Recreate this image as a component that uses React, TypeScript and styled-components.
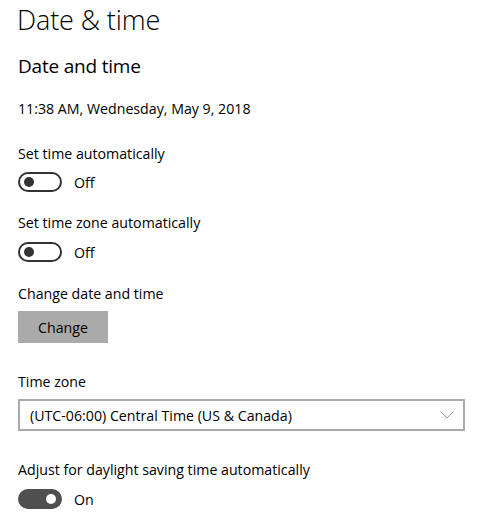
import React from "react";
import styled, { createGlobalStyle } from "styled-components";

const Global = createGlobalStyle`
  html, body { margin: 0; padding: 0; background: #ffffff; }
  body { font-family: "Open Sans", "Noto Sans", sans-serif; color: #000; }
`;

const Page = styled.div`
  padding: 0 21px 0 18px;
  display: flex;
  flex-direction: column;
  width: 486px;
  box-sizing: border-box;
`;

const Title = styled.h1`
  margin: 0 0 0 -1px;
  font-size: 27px;
  font-weight: 300;
  line-height: 40px;
  height: 40px;
  letter-spacing: -0.1px;
`;

const Subtitle = styled.h2`
  margin: 12px 0 0 0;
  font-size: 19px;
  font-weight: 400;
  line-height: 28px;
  height: 28px;
  letter-spacing: -0.2px;
`;

const Text = styled.div<{ $mt: number }>`
  margin-top: ${(p) => p.$mt}px;
  font-size: 14.2px;
  line-height: 20px;
  height: 20px;
  white-space: nowrap;
`;

const ToggleRow = styled.div<{ $mt: number }>`
  margin-top: ${(p) => p.$mt}px;
  display: flex;
  align-items: center;
  gap: 12px;
  height: 20px;
  font-size: 14.2px;
`;

const Track = styled.div<{ $on: boolean }>`
  width: 44px;
  height: 20px;
  box-sizing: border-box;
  border-radius: 10px;
  border: 2px solid ${(p) => (p.$on ? "#4f4f4f" : "#333333")};
  background: ${(p) => (p.$on ? "#4f4f4f" : "#ffffff")};
  display: flex;
  align-items: center;
  justify-content: ${(p) => (p.$on ? "flex-end" : "flex-start")};
  padding: 0 4px;
`;

const Thumb = styled.div<{ $on: boolean }>`
  width: 10px;
  height: 10px;
  border-radius: 50%;
  background: ${(p) => (p.$on ? "#ffffff" : "#333333")};
`;

const Button = styled.button`
  margin-top: 7px;
  width: 90px;
  height: 32px;
  border: none;
  background: #aaaaaa;
  font-family: inherit;
  font-size: 14.2px;
  color: #000;
  padding: 0;
  align-self: flex-start;
`;

const Select = styled.div`
  margin-top: 7px;
  height: 32px;
  box-sizing: border-box;
  border: 2px solid #aaaaaa;
  display: flex;
  align-items: center;
  justify-content: space-between;
  padding: 0 9px 0 10px;
  font-size: 14.2px;
`;

const Toggle: React.FC<{ on: boolean; label: string; mt: number }> = ({ on, label, mt }) => (
  <ToggleRow $mt={mt}>
    <Track $on={on}>
      <Thumb $on={on} />
    </Track>
    <span>{label}</span>
  </ToggleRow>
);

export default function App() {
  return (
    <Page>
      <Global />
      <Title>Date &amp; time</Title>
      <Subtitle>Date and time</Subtitle>
      <Text $mt={19}>11:38 AM, Wednesday, May 9, 2018</Text>
      <Text $mt={25}>Set time automatically</Text>
      <Toggle on={false} label="Off" mt={8} />
      <Text $mt={21}>Set time zone automatically</Text>
      <Toggle on={false} label="Off" mt={9} />
      <Text $mt={22}>Change date and time</Text>
      <Button>Change</Button>
      <Text $mt={29}>Time zone</Text>
      <Select>
        <span>(UTC-06:00) Central Time (US &amp; Canada)</span>
        <svg width="14" height="8" viewBox="0 0 14 8">
          <path d="M0.5 0.5 L7 7 L13.5 0.5" fill="none" stroke="#999" strokeWidth="1" />
        </svg>
      </Select>
      <Text $mt={29}>Adjust for daylight saving time automatically</Text>
      <Toggle on={true} label="On" mt={9} />
    </Page>
  );
}
